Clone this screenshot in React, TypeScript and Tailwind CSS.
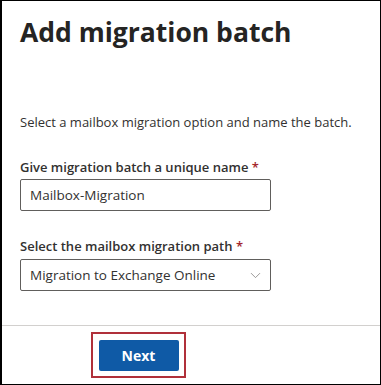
import { ChevronDown } from 'lucide-react'

const FONT = { fontFamily: '"Open Sans", "Noto Sans", sans-serif' }

function Label({ text }: { text: string }) {
  return (
    <div className="text-[13px] font-semibold text-[#323130] leading-5">
      {text} <span className="text-[#a4262c]">*</span>
    </div>
  )
}

export default function App() {
  return (
    <div
      className="w-[381px] h-[385px] bg-white border border-black border-l-2 flex flex-col overflow-hidden"
      style={FONT}
    >
      <div className="flex flex-col px-[18px] flex-1">
        <h1 className="mt-[13px] text-[26.5px] font-bold text-[#252423] leading-9">
          Add migration batch
        </h1>

        <p className="mt-[62px] text-[13px] text-[#323130] leading-5">
          Select a mailbox migration option and name the batch.
        </p>

        <div className="mt-[25px]">
          <Label text="Give migration batch a unique name" />
          <div className="mt-[2px] w-[251px] h-[32px] border border-[#605e5c] rounded-[2px] flex items-center px-[9px] text-[13.5px] text-[#323130]">
            Mailbox-Migration
          </div>
        </div>

        <div className="mt-[25px]">
          <Label text="Select the mailbox migration path" />
          <div className="mt-[3px] w-[251px] h-[32px] border border-[#605e5c] rounded-[2px] flex items-center justify-between pl-[9px] pr-[6px] text-[13.5px] text-[#323130]">
            <span>Migration to Exchange Online</span>
            <ChevronDown size={17} strokeWidth={1.2} className="text-[#8a8886]" />
          </div>
        </div>
      </div>

      <div className="h-[59px] border-t border-[#d2d0ce] pl-[89px] pt-[6px]">
        <div className="w-[95px] h-[46px] border-2 border-[#b0303a] flex items-center justify-center">
          <button className="w-[80px] h-[31px] bg-[#0f5aa6] rounded-[2px] text-white text-[14px] font-bold">
            Next
          </button>
        </div>
      </div>
    </div>
  )
}
